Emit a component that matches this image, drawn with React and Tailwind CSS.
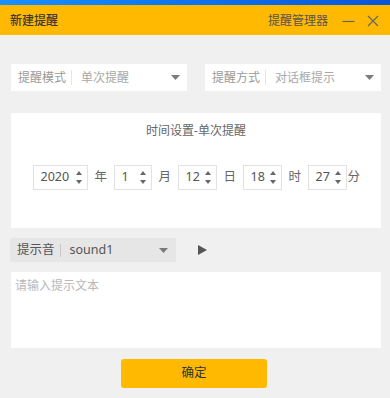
import React from "react";

const font = { fontFamily: '"Noto Sans", "Noto Sans CJK SC", sans-serif' };

function Caret({ className = "" }) {
  return (
    <svg width="9" height="5" viewBox="0 0 9 5" className={className}>
      <path d="M0 0 H9 L4.5 5 Z" fill="#7a7a7a" />
    </svg>
  );
}

function Select({ label, value, width }) {
  return (
    <div className={`flex items-center h-[27px] bg-white pl-[7px] pr-[7px] text-[12px] ${width}`}>
      <span className="text-[#9a9a9a]">{label}</span>
      <span className="w-px h-[15px] bg-[#e6e6e6] mx-[5px]" />
      <span className="text-[#a8a8a8] ml-[4px] flex-1">{value}</span>
      <Caret />
    </div>
  );
}

function Spinner({ value, width }) {
  return (
    <div className={`flex items-center justify-between h-[25px] border border-[#e2e2e2] bg-white pl-[7px] pr-[5px] ${width}`}>
      <span className="text-[12.5px] text-[#555]">{value}</span>
      <div className="flex flex-col items-center gap-[5px]">
        <svg width="6" height="4" viewBox="0 0 6 4">
          <path d="M0 4 L3 0 L6 4 Z" fill="#666" />
        </svg>
        <svg width="6" height="4" viewBox="0 0 6 4">
          <path d="M0 0 H6 L3 4 Z" fill="#666" />
        </svg>
      </div>
    </div>
  );
}

function Unit({ children, className = "mx-[7px]" }) {
  return <span className={`text-[12.5px] text-[#666] w-[12px] text-center ${className}`}>{children}</span>;
}

export default function App() {
  return (
    <div className="w-[390px] h-[398px] bg-[#f0f0f0] overflow-hidden" style={font}>
      {/* title bar */}
      <div className="h-[5px] bg-gradient-to-r from-[#1a8fff] to-[#0b55d8]" />
      <div className="h-[30px] bg-[#ffb900] flex items-center justify-between pl-[10px] pr-[11px] pt-[2px]">
        <span className="text-[12px] text-[#3a3a3a] font-medium">新建提醒</span>
        <div className="flex items-center">
          <span className="text-[12px] text-[#555]">提醒管理器</span>
          <svg width="13" height="13" viewBox="0 0 13 13" className="ml-[14px]">
            <path d="M0.5 6.5 H12.5" stroke="#666" strokeWidth="1.2" />
          </svg>
          <svg width="12" height="12" viewBox="0 0 12 12" className="ml-[12px]">
            <path d="M1 1 L11 11 M11 1 L1 11" stroke="#666" strokeWidth="1.2" />
          </svg>
        </div>
      </div>

      <div className="pl-[11px] pr-[9px]">
        {/* selects */}
        <div className="flex gap-[18px] mt-[29px]">
          <Select label="提醒模式" value="单次提醒" width="w-[176px]" />
          <Select label="提醒方式" value="对话框提示" width="w-[176px]" />
        </div>

        {/* time panel */}
        <div className="mt-[22px] h-[115px] bg-white pt-[10px]">
          <div className="text-center text-[12px] text-[#666] leading-[16px]">时间设置-单次提醒</div>
          <div className="flex items-center justify-center mt-[26px]">
            <Spinner value="2020" width="w-[55px]" />
            <Unit>年</Unit>
            <Spinner value="1" width="w-[38px]" />
            <Unit>月</Unit>
            <Spinner value="12" width="w-[39px]" />
            <Unit>日</Unit>
            <Spinner value="18" width="w-[39px]" />
            <Unit>时</Unit>
            <Spinner value="27" width="w-[39px]" />
            <Unit className="ml-[1px]">分</Unit>
          </div>
        </div>

        {/* sound */}
        <div className="flex items-center mt-[10px]">
          <div className="flex items-center h-[24px] w-[166px] -ml-[1px] bg-[#e6e6e6] pl-[7px] pr-[8px] text-[12.5px] text-[#555]">
            <span>提示音</span>
            <span className="w-px h-[13px] bg-[#c8c8c8] mx-[5px]" />
            <span className="ml-[4px] flex-1">sound1</span>
            <Caret />
          </div>
          <svg width="9" height="10" viewBox="0 0 9 10" className="ml-[22px]">
            <path d="M0 0 L9 5 L0 10 Z" fill="#555" />
          </svg>
        </div>

        {/* text */}
        <div className="mt-[10px] h-[76px] bg-white px-[4px] pt-[4px] leading-[16px]">
          <span className="text-[12px] text-[#b8b8b8]">请输入提示文本</span>
        </div>

        {/* button */}
        <div className="mt-[11px] pl-[110px]">
          <button className="w-[146px] h-[29px] rounded-[3px] bg-[#ffb900] text-[12.5px] text-[#333]">确定</button>
        </div>
      </div>
    </div>
  );
}
